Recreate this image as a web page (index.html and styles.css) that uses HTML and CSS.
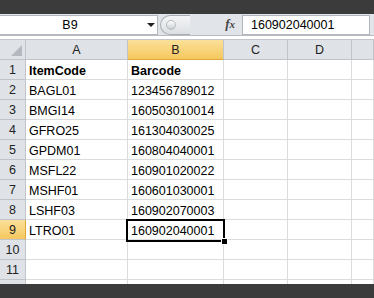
FILE: index.html
```html
<!DOCTYPE html>
<html lang="en">
<head>
    <meta charset="UTF-8">
    <title>Barcodes</title>
    <link rel="stylesheet" href="styles.css">
</head>
<body>
    <div class="topbar"></div>

    <div class="formula-bar">
        <div class="name-box">
            <span class="name">B9</span>
            <span class="drop"></span>
        </div>
        <div class="splitter"><span class="knob"></span></div>
        <div class="fx">f<span>x</span></div>
        <div class="formula-input">160902040001</div>
    </div>
    <div class="gap"></div>

    <div class="sheet">
        <div class="hd corner"><span class="tri"></span></div>
        <div class="hd col">A</div>
        <div class="hd col sel">B</div>
        <div class="hd col">C</div>
        <div class="hd col">D</div>
        <div class="hd col"></div>

        <div class="hd row">1</div><div class="c bold">ItemCode</div><div class="c bold">Barcode</div><div class="c"></div><div class="c"></div><div class="c"></div>
        <div class="hd row">2</div><div class="c">BAGL01</div><div class="c">123456789012</div><div class="c"></div><div class="c"></div><div class="c"></div>
        <div class="hd row">3</div><div class="c">BMGI14</div><div class="c">160503010014</div><div class="c"></div><div class="c"></div><div class="c"></div>
        <div class="hd row">4</div><div class="c">GFRO25</div><div class="c">161304030025</div><div class="c"></div><div class="c"></div><div class="c"></div>
        <div class="hd row">5</div><div class="c">GPDM01</div><div class="c">160804040001</div><div class="c"></div><div class="c"></div><div class="c"></div>
        <div class="hd row">6</div><div class="c">MSFL22</div><div class="c">160901020022</div><div class="c"></div><div class="c"></div><div class="c"></div>
        <div class="hd row">7</div><div class="c">MSHF01</div><div class="c">160601030001</div><div class="c"></div><div class="c"></div><div class="c"></div>
        <div class="hd row">8</div><div class="c">LSHF03</div><div class="c">160902070003</div><div class="c"></div><div class="c"></div><div class="c"></div>
        <div class="hd row sel">9</div><div class="c">LTRO01</div><div class="c">160902040001</div><div class="c"></div><div class="c"></div><div class="c"></div>
        <div class="hd row">10</div><div class="c"></div><div class="c"></div><div class="c"></div><div class="c"></div><div class="c"></div>
        <div class="hd row">11</div><div class="c"></div><div class="c"></div><div class="c"></div><div class="c"></div><div class="c"></div>
        <div class="hd row">12</div><div class="c"></div><div class="c"></div><div class="c"></div><div class="c"></div><div class="c"></div>

        <div class="active"><span class="handle"></span></div>
    </div>

    <div class="bottombar"></div>
</body>
</html>
```

FILE: styles.css
```css
body {
    margin: 0;
    width: 374px;
    height: 298px;
    overflow: hidden;
    position: relative;
    background-color: #fff;
    font-family: "Liberation Sans", Arial, sans-serif;
    font-size: 12.5px;
    color: #000;
}
.topbar {
    height: 14px;
    background-color: #3b3b3b;
}
.formula-bar {
    height: 22px;
    display: flex;
    align-items: flex-start;
    background-color: #e1e4e8;
    border-bottom: 1px solid #b6bbc1;
    box-sizing: border-box;
}
.name-box {
    width: 158px;
    height: 20px;
    margin-top: 1px;
    background-color: #fff;
    border: 1px solid #b2b7bd;
    border-left: none;
    box-sizing: border-box;
    display: flex;
    align-items: center;
    position: relative;
}
.name {
    width: 140px;
    text-align: center;
    font-family: "Liberation Sans", Arial, sans-serif;
    font-size: 12.5px;
}
.drop {
    width: 0;
    height: 0;
    border-left: 4px solid transparent;
    border-right: 4px solid transparent;
    border-top: 4px solid #222;
    margin-left: 7px;
}
.splitter {
    width: 30px;
    height: 20px;
    margin-top: 1px;
    margin-left: 2px;
    box-sizing: border-box;
    border: 1px solid #a9aeb5;
    border-right: none;
    border-radius: 11px 0 0 11px;
    background: linear-gradient(#f4f5f6, #dcdfe3);
    display: flex;
    align-items: center;
    padding-left: 5px;
}
.knob {
    width: 8px;
    height: 8px;
    border-radius: 50%;
    border: 1px solid #b7bbc1;
    background: linear-gradient(#ffffff, #c9cdd2);
}
.fx {
    width: 52px;
    height: 21px;
    line-height: 20px;
    text-align: right;
    padding-right: 7px;
    box-sizing: border-box;
    font-family: "Liberation Serif", "Times New Roman", serif;
    font-style: italic;
    font-weight: bold;
    font-size: 13px;
    color: #444;
}
.fx span {
    font-size: 11px;
}
.formula-input {
    width: 128px;
    height: 20px;
    margin-top: 1px;
    background-color: #fff;
    border: 1px solid #b2b7bd;
    box-sizing: border-box;
    padding-left: 8px;
    line-height: 19px;
}
.gap {
    height: 3px;
    border-bottom: 1px solid #c2c6cb;
}
.sheet {
    display: grid;
    grid-template-columns: 26px 102px 96px 64px 64px 1fr;
    grid-auto-rows: 20px;
    position: relative;
}
.hd {
    background-color: #dfe3e8;
    border-right: 1px solid #c0c4ca;
    border-bottom: 1px solid #c0c4ca;
    box-sizing: border-box;
    display: flex;
    align-items: center;
    justify-content: center;
    padding-top: 1px;
    color: #222;
}
.hd.corner {
    position: relative;
}
.tri {
    position: absolute;
    right: 3px;
    bottom: 3px;
    width: 0;
    height: 0;
    border-left: 11px solid transparent;
    border-bottom: 11px solid #b5b9bf;
}
.hd.col.sel {
    background: linear-gradient(#fbe09a, #f5c85e);
    border-bottom: 1px solid #e0a83a;
}
.hd.row.sel {
    background: linear-gradient(#fbe09a, #f5c85e);
    border-right: 1px solid #e0a83a;
}
.c {
    border-right: 1px solid #dadcdd;
    border-bottom: 1px solid #dadcdd;
    box-sizing: border-box;
    padding: 2px 0 0 3px;
    line-height: 18px;
    white-space: nowrap;
    overflow: hidden;
}
.bold {
    font-weight: bold;
}
.active {
    position: absolute;
    left: 126px;
    top: 179px;
    width: 99px;
    height: 23px;
    border: 2px solid #000;
    box-sizing: border-box;
}
.handle {
    position: absolute;
    right: -5px;
    bottom: -5px;
    width: 5px;
    height: 5px;
    background-color: #000;
    border: 1px solid #fff;
}
.bottombar {
    position: absolute;
    left: 0;
    top: 284px;
    width: 374px;
    height: 14px;
    background-color: #3b3b3b;
}
```
